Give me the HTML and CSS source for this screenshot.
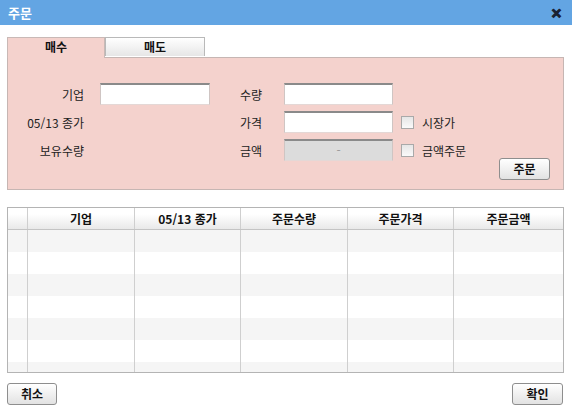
FILE: index.html
```html
<!DOCTYPE html>
<html lang="ko">
<head>
<meta charset="utf-8">
<link rel="stylesheet" href="styles.css">
</head>
<body>
<div class="dialog">
  <div class="titlebar">
    <span class="title">주문</span>
    <span class="close">✕</span>
  </div>
  <div class="body">
    <div class="tabs">
      <div class="tab active">매수</div>
      <div class="tab">매도</div>
    </div>
    <div class="panel">
      <div class="form">
        <div class="lbl1">기업</div>
        <div class="input first"></div>
        <div class="lbl2">수량</div>
        <div class="input"></div>
        <div></div>

        <div class="lbl1">05/13 종가</div>
        <div></div>
        <div class="lbl2">가격</div>
        <div class="input"></div>
        <div class="check"><span class="box"></span>시장가</div>

        <div class="lbl1">보유수량</div>
        <div></div>
        <div class="lbl2">금액</div>
        <div class="input disabled">-</div>
        <div class="check"><span class="box"></span>금액주문</div>
      </div>
      <div class="panel-actions">
        <button class="btn">주문</button>
      </div>
    </div>

    <div class="grid">
      <div class="row head">
        <div class="c c0"></div>
        <div class="c c1">기업</div>
        <div class="c c2">05/13 종가</div>
        <div class="c c3">주문수량</div>
        <div class="c c4">주문가격</div>
        <div class="c c5">주문금액</div>
      </div>
      <div class="rows">
        <div class="row odd"><div class="c c0"></div><div class="c c1"></div><div class="c c2"></div><div class="c c3"></div><div class="c c4"></div><div class="c c5"></div></div>
        <div class="row"><div class="c c0"></div><div class="c c1"></div><div class="c c2"></div><div class="c c3"></div><div class="c c4"></div><div class="c c5"></div></div>
        <div class="row odd"><div class="c c0"></div><div class="c c1"></div><div class="c c2"></div><div class="c c3"></div><div class="c c4"></div><div class="c c5"></div></div>
        <div class="row"><div class="c c0"></div><div class="c c1"></div><div class="c c2"></div><div class="c c3"></div><div class="c c4"></div><div class="c c5"></div></div>
        <div class="row odd"><div class="c c0"></div><div class="c c1"></div><div class="c c2"></div><div class="c c3"></div><div class="c c4"></div><div class="c c5"></div></div>
        <div class="row"><div class="c c0"></div><div class="c c1"></div><div class="c c2"></div><div class="c c3"></div><div class="c c4"></div><div class="c c5"></div></div>
        <div class="row odd"><div class="c c0"></div><div class="c c1"></div><div class="c c2"></div><div class="c c3"></div><div class="c c4"></div><div class="c c5"></div></div>
      </div>
    </div>

    <div class="footer">
      <button class="btn">취소</button>
      <button class="btn ok">확인</button>
    </div>
  </div>
</div>
</body>
</html>
```

FILE: styles.css
```css
* { box-sizing: border-box; }
html, body {
  margin: 0;
  padding: 0;
  background: #ffffff;
}
body {
  font-family: "Noto Sans CJK KR", "Noto Sans", sans-serif;
  font-size: 12px;
  color: #222;
  width: 572px;
  height: 409px;
  overflow: hidden;
}
.titlebar {
  height: 25px;
  background: #63a5e3;
  display: flex;
  align-items: center;
  justify-content: space-between;
  padding: 0 10px 0 8px;
}
.title {
  color: #fff;
  font-weight: bold;
  font-size: 13px;
  line-height: 25px;
}
.close {
  color: #1a2233;
  font-weight: bold;
  font-size: 13px;
  line-height: 1;
  -webkit-text-stroke: 1px #1a2233;
}
.body {
  padding: 12px 8px 0 7px;
}
.tabs {
  display: flex;
  height: 20px;
}
.tab {
  width: 100px;
  height: 19px;
  border: 1px solid #b9b9b9;
  border-bottom: none;
  background: linear-gradient(#ffffff, #e6e6e6);
  font-weight: bold;
  text-align: center;
  line-height: 18px;
  color: #111;
}
.tab.active {
  width: 98px;
  height: 21px;
  background: #f4d2cd;
  border-color: #c9b9b6;
  position: relative;
  z-index: 1;
}
.panel {
  height: 133px;
  background: #f4d2cd;
  border: 1px solid #c6b6b3;
  display: flex;
  flex-direction: column;
  padding-top: 25px;
}
.form {
  display: grid;
  grid-template-columns: 76px 126px 74px 109px auto;
  row-gap: 6px;
  grid-auto-rows: 22px;
  align-items: center;
}
.lbl1 {
  text-align: right;
  color: #222;
}
.lbl2 {
  padding-left: 30px;
  color: #222;
}
.input {
  height: 22px;
  background: #fff;
  border: 1px solid #e4d8d6;
  border-top: 2px solid #8a8a8a;
  border-left-color: #cfc5c3;
  border-right-color: #cfc5c3;
}
.input.first {
  margin-left: 16px;
}
.input.disabled {
  background: #dcdcdc;
  color: #999;
  text-align: center;
  line-height: 18px;
}
.check {
  display: flex;
  align-items: center;
  gap: 8px;
  padding-left: 8px;
  color: #222;
}
.box {
  width: 13px;
  height: 13px;
  border: 1px solid #a9a9a9;
  background: linear-gradient(#e6e6e6, #fafafa);
}
.panel-actions {
  display: flex;
  justify-content: flex-end;
  padding-right: 13px;
  margin-top: -3px;
}
.btn {
  font-family: inherit;
  font-size: 12px;
  font-weight: bold;
  color: #111;
  width: 51px;
  height: 22px;
  padding: 0;
  border: 1px solid #8e8e8e;
  border-radius: 3px;
  background: linear-gradient(#ffffff, #e2e2e2);
  line-height: 20px;
}
.grid {
  margin-top: 17px;
  height: 166px;
  border: 1px solid #b4b4b4;
  overflow: hidden;
}
.row {
  display: flex;
  height: 22px;
}
.row.head {
  height: 22px;
  background: linear-gradient(#ffffff 30%, #e9e9e9);
  border-bottom: 1px solid #c4c4c4;
  font-weight: bold;
  color: #111;
}
.rows .row.odd { background: #f5f5f5; }
.c {
  border-right: 1px solid #cfcfcf;
  text-align: center;
  line-height: 21px;
}
.c0 { width: 20px; }
.c1 { width: 107px; }
.c2 { width: 106px; }
.c3 { width: 107px; }
.c4 { width: 106px; }
.c5 { flex: 1; border-right: none; }
.footer {
  display: flex;
  justify-content: space-between;
  margin-top: 10px;
  padding-right: 1px;
}
.footer .btn { width: 50px; }
.footer .btn.ok { width: 51px; }
```
